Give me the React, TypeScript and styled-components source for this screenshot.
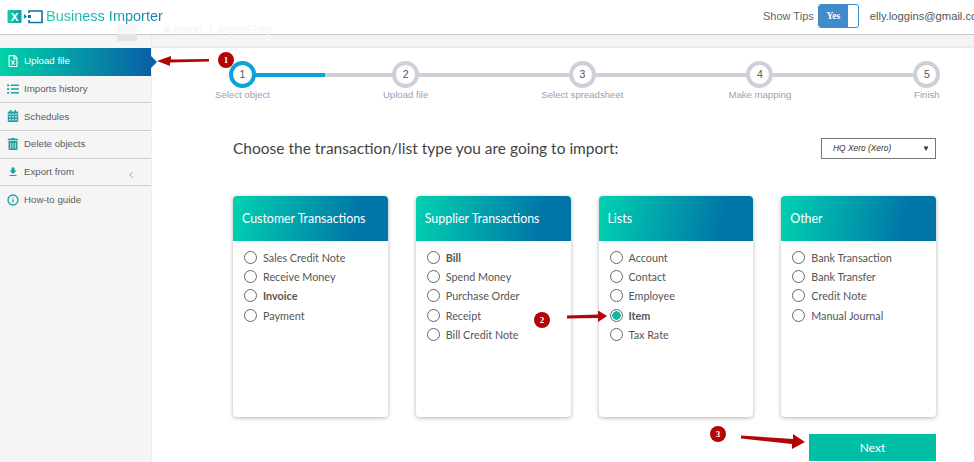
import React from 'react'
import styled, { createGlobalStyle } from 'styled-components'
import { FaRegFileExcel, FaListUl, FaCalendarAlt, FaTrashAlt, FaHome } from 'react-icons/fa'
import { MdFileDownload } from 'react-icons/md'
import { FiChevronLeft, FiInfo } from 'react-icons/fi'

const GlobalStyle = createGlobalStyle`
  html, body {
    margin: 0;
    padding: 0;
    background: #fff;
    font-family: 'Liberation Sans', Arial, sans-serif;
  }
`

const Page = styled.div`
  position: relative;
  width: 974px;
  height: 462px;
  overflow: hidden;
  display: flex;
  flex-direction: column;
`

const TopBar = styled.header`
  height: 34px;
  flex: none;
  display: flex;
  align-items: center;
  padding-left: 7px;
  border-bottom: 1px solid #c8c8c8;
  background: #fff;
  white-space: nowrap;
`

const Logo = styled.svg`
  width: 36px;
  height: 15px;
  flex: none;
  margin-top: -2px;
`

const Brand = styled.span`
  margin-left: 3px;
  margin-top: -2px;
  font-size: 14.5px;
  background: linear-gradient(90deg, #19cfb0, #0f7fb0);
  -webkit-background-clip: text;
  background-clip: text;
  color: transparent;
`

const Crumbs = styled.span`
  margin-top: 24px;
  display: flex;
  align-items: center;
  gap: 4px;
  font-size: 10px;
  color: #f0f3f8;
  word-spacing: 4px;
`

const TopRight = styled.div`
  margin-left: auto;
  display: flex;
  align-items: center;
  width: 211px;
  flex: none;
  margin-top: -2px;
`

const TipsLabel = styled.span`
  flex: none;
  font-size: 11px;
  color: #666;
`

const Toggle = styled.div`
  width: 41px;
  height: 24px;
  flex: none;
  margin-left: 4px;
  box-sizing: border-box;
  display: flex;
  border: 1px solid #428bca;
  border-radius: 3px;
  overflow: hidden;
`

const ToggleOn = styled.span`
  width: 29px;
  background: #428bca;
  color: #fff;
  font: bold 9.5px/22px 'Liberation Serif', serif;
  text-align: center;
`

const Email = styled.span`
  flex: none;
  margin-left: 11px;
  font-size: 11.2px;
  color: #555;
`

const Body = styled.div`
  flex: 1;
  display: flex;
  min-height: 0;
`

const Sidebar = styled.nav`
  width: 151px;
  flex: none;
  padding-top: 13px;
  background: #f5f5f5;
  border-right: 1px solid #ececec;
`

const MenuItem = styled.div<{ $active?: boolean }>`
  position: relative;
  height: 27.7px;
  box-sizing: border-box;
  padding: 0 0 1px 7px;
  display: flex;
  align-items: center;
  gap: 5px;
  font-size: 9.7px;
  color: ${p => (p.$active ? '#fff' : '#5c5c5c')};
  background: ${p => (p.$active ? 'linear-gradient(90deg, #00d2a8, #0a5fa6)' : 'transparent')};
  border-bottom: 1px solid ${p => (p.$active ? 'transparent' : '#cdcdcd')};

  &:last-child {
    border-bottom: none;
  }

  & > svg {
    width: 12px;
    height: 12px;
    flex: none;
    color: ${p => (p.$active ? '#fff' : '#1f9fa8')};
  }
`

const ActiveNotch = styled.span`
  position: absolute;
  top: 8px;
  right: -6px;
  border-left: 6px solid #0a5fa6;
  border-top: 6px solid transparent;
  border-bottom: 6px solid transparent;
`

const CollapseMark = styled.span`
  margin-left: auto;
  margin-right: 15px;
  margin-top: 7px;
  display: flex;
  color: #5da9b8;
`

const CollapseHandle = styled.div`
  position: absolute;
  left: 117px;
  top: 24px;
  width: 20px;
  height: 17px;
  background: linear-gradient(180deg, #f8f8f8 0 10px, #e4e4e4 10px);
`

const Main = styled.main`
  flex: 1;
  min-width: 0;
  display: flex;
  flex-direction: column;
`

const Strip = styled.div`
  height: 13px;
  flex: none;
  box-sizing: border-box;
  background: #f4f4f4;
  border-bottom: 2px solid #ebebeb;
`

const Content = styled.div`
  padding: 13px 38px 0 81px;
`

const Stepper = styled.ol`
  position: relative;
  list-style: none;
  margin: 0 -3px 0 -18px;
  padding: 0;
  display: flex;
`

const Track = styled.div`
  position: absolute;
  left: 27px;
  right: 12px;
  top: 12px;
  height: 4px;
  background: #cdd0d6;
`

const TrackDone = styled.div`
  width: 83px;
  height: 100%;
  background: #0ba3d8;
`

const Step = styled.li<{ $gap: number }>`
  position: relative;
  margin-left: ${p => p.$gap}px;
  display: flex;
  flex-direction: column;
  align-items: center;
  gap: 1px;
`

const StepDot = styled.span<{ $current?: boolean }>`
  width: 27px;
  height: 27px;
  box-sizing: border-box;
  border: 4px solid ${p => (p.$current ? '#0ba3d8' : '#cdd0d6')};
  border-radius: 50%;
  background: #fff;
  font-size: 10.5px;
  line-height: 18px;
  text-align: center;
  color: #555;
`

const StepLabel = styled.span`
  font-size: 9.6px;
  line-height: 12px;
  color: #9aa3ad;
  white-space: nowrap;
`

const ChooserRow = styled.div`
  margin-top: 35px;
  display: flex;
  align-items: center;
  justify-content: space-between;
`

const Heading = styled.h2`
  margin: 0;
  font: 400 15.5px/24px Lato, sans-serif;
  color: #444;
`

const OrgSelect = styled.div`
  width: 115px;
  height: 21px;
  box-sizing: border-box;
  padding: 0 5px 0 11px;
  display: flex;
  align-items: center;
  justify-content: space-between;
  border: 1px solid #777;
  font-size: 8.4px;
  font-style: italic;
  color: #333;
`

const Caret = styled.span`
  font-style: normal;
  font-size: 8px;
`

const Cards = styled.div`
  margin-top: 36px;
  display: grid;
  grid-template-columns: repeat(4, 1fr);
  gap: 28px;
`

const Card = styled.section`
  height: 221px;
  border-radius: 4px;
  background: #fff;
  box-shadow: 0 1px 4px rgba(0, 0, 0, 0.3);
  overflow: hidden;
`

const CardHeader = styled.h3`
  margin: 0;
  height: 45px;
  padding-left: 9px;
  display: flex;
  align-items: center;
  background: linear-gradient(100deg, #00d2b0 0%, #0075a8 80%);
  font: 400 12.4px Lato, sans-serif;
  color: #fff;
`

const RadioList = styled.div`
  padding: 7px 11px 0;
  display: flex;
  flex-direction: column;
`

const RadioRow = styled.div<{ $bold?: boolean }>`
  height: 19.2px;
  display: flex;
  align-items: center;
  gap: 6px;
  font: ${p => (p.$bold ? 700 : 400)} 10.8px Lato, sans-serif;
  color: #555;
`

const RadioMark = styled.span<{ $checked?: boolean }>`
  width: 13px;
  height: 13px;
  flex: none;
  box-sizing: border-box;
  border: 1px solid #666;
  border-radius: 50%;
  background: ${p => (p.$checked ? 'radial-gradient(circle, #12b8a0 0 4px, #fff 4.5px)' : '#fff')};
`

const Footer = styled.div`
  margin-top: 17px;
  display: flex;
  justify-content: flex-end;
`

const NextButton = styled.button`
  width: 127px;
  height: 27px;
  border: none;
  padding: 0;
  background: #00bfa5;
  color: #fff;
  font: 400 12px Lato, sans-serif;
`

const Badge = styled.span<{ $x: number; $y: number }>`
  position: absolute;
  left: ${p => p.$x - 8}px;
  top: ${p => p.$y - 8}px;
  width: 16px;
  height: 16px;
  border-radius: 50%;
  background: #b30505;
  color: #fff;
  font: bold 9px/16px 'Liberation Serif', serif;
  text-align: center;
`

const ArrowLayer = styled.svg`
  position: absolute;
  inset: 0;
  width: 974px;
  height: 462px;
  pointer-events: none;
`

const menu = [
  { label: 'Upload file', icon: <FaRegFileExcel />, active: true },
  { label: 'Imports history', icon: <FaListUl /> },
  { label: 'Schedules', icon: <FaCalendarAlt /> },
  { label: 'Delete objects', icon: <FaTrashAlt /> },
  { label: 'Export from', icon: <MdFileDownload />, collapsible: true },
  { label: 'How-to guide', icon: <FiInfo strokeWidth={2.6} /> },
]

// the labels are not evenly spread, each one carries its own left gap
const steps = [
  { label: 'Select object', gap: 0 },
  { label: 'Upload file', gap: 113 },
  { label: 'Select spreadsheet', gap: 113 },
  { label: 'Make mapping', gap: 105 },
  { label: 'Finish', gap: 122 },
]

type Option = { label: string; bold?: boolean; checked?: boolean }

const groups: { title: string; options: Option[] }[] = [
  {
    title: 'Customer Transactions',
    options: [
      { label: 'Sales Credit Note' },
      { label: 'Receive Money' },
      { label: 'Invoice', bold: true },
      { label: 'Payment' },
    ],
  },
  {
    title: 'Supplier Transactions',
    options: [
      { label: 'Bill', bold: true },
      { label: 'Spend Money' },
      { label: 'Purchase Order' },
      { label: 'Receipt' },
      { label: 'Bill Credit Note' },
    ],
  },
  {
    title: 'Lists',
    options: [
      { label: 'Account' },
      { label: 'Contact' },
      { label: 'Employee' },
      { label: 'Item', bold: true, checked: true },
      { label: 'Tax Rate' },
    ],
  },
  {
    title: 'Other',
    options: [
      { label: 'Bank Transaction' },
      { label: 'Bank Transfer' },
      { label: 'Credit Note' },
      { label: 'Manual Journal' },
    ],
  },
]

const App = () => {
  return (
    <Page>
      <GlobalStyle />
      <TopBar>
        <Logo viewBox="0 0 36 15">
          <defs>
            <linearGradient id="mark" x1="0" x2="1">
              <stop offset="0" stopColor="#12cfa8" />
              <stop offset="1" stopColor="#0f9db0" />
            </linearGradient>
          </defs>
          <rect x="0.5" y="1" width="14" height="13" rx="1" fill="url(#mark)" />
          <text x="7.5" y="11.5" textAnchor="middle" fontSize="11.5" fontWeight="bold" fontFamily="Liberation Sans" fill="#fff">X</text>
          <path d="M17 5l3 2.5-3 2.5z" fill="#118fae" />
          <path d="M22 4V2h13v11.5H22V11" fill="none" stroke="#0f6fa8" strokeWidth="1.6" />
          <rect x="21" y="6" width="3" height="3" fill="#0f6fa8" />
        </Logo>
        <Brand>Business Importer</Brand>
        <Crumbs>
          <FaHome size={7} />
          Import / ImportEntity
        </Crumbs>
        <TopRight>
          <TipsLabel>Show Tips</TipsLabel>
          <Toggle>
            <ToggleOn>Yes</ToggleOn>
          </Toggle>
          <Email>elly.loggins@gmail.com</Email>
        </TopRight>
      </TopBar>

      <Body>
        <Sidebar>
          {menu.map(item => (
            <MenuItem key={item.label} $active={item.active}>
              {item.icon}
              {item.label}
              {item.active && <ActiveNotch />}
              {item.collapsible && (
                <CollapseMark>
                  <FiChevronLeft size={10} />
                </CollapseMark>
              )}
            </MenuItem>
          ))}
        </Sidebar>

        <Main>
          <Strip />
          <Content>
            <Stepper>
              <Track>
                <TrackDone />
              </Track>
              {steps.map((step, i) => (
                <Step key={step.label} $gap={step.gap}>
                  <StepDot $current={i === 0}>{i + 1}</StepDot>
                  <StepLabel>{step.label}</StepLabel>
                </Step>
              ))}
            </Stepper>

            <ChooserRow>
              <Heading>Choose the transaction/list type you are going to import:</Heading>
              <OrgSelect>
                HQ Xero (Xero)
                <Caret>▼</Caret>
              </OrgSelect>
            </ChooserRow>

            <Cards>
              {groups.map(group => (
                <Card key={group.title}>
                  <CardHeader>{group.title}</CardHeader>
                  <RadioList>
                    {group.options.map(option => (
                      <RadioRow key={option.label} $bold={option.bold}>
                        <RadioMark $checked={option.checked} />
                        {option.label}
                      </RadioRow>
                    ))}
                  </RadioList>
                </Card>
              ))}
            </Cards>

            <Footer>
              <NextButton>Next</NextButton>
            </Footer>
          </Content>
        </Main>
      </Body>

      <CollapseHandle />

      {/* callout arrows and numbered badges */}
      <ArrowLayer viewBox="0 0 974 462">
        <path d="M209 59L171 59.5V56L157 61 170 66V62.5L209 61.5Z" fill="#b30505" />
        <path d="M567 315.5L598 314.5V310.5L607 316 598 322V318L567 318.5Z" fill="#b30505" />
        <path d="M741 435.5L793 439V434L805 442 792 449V444L741 438.5Z" fill="#b30505" />
      </ArrowLayer>
      <Badge $x={226} $y={60}>1</Badge>
      <Badge $x={542} $y={320}>2</Badge>
      <Badge $x={718} $y={434}>3</Badge>
    </Page>
  )
}

export default App
